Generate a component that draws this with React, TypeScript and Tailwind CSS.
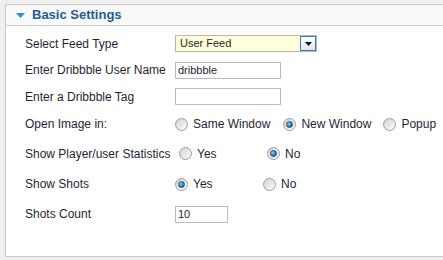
import type { FunctionComponent, ReactNode } from "react";

const Radio: FunctionComponent<{ checked?: boolean }> = ({ checked }) => {
  return (
    <span className="w-[13px] h-[13px] min-w-[13px] rounded-full border border-[#9c9c9c] bg-gradient-to-br from-[#d4d4d4] to-[#fbfbfb] flex items-center justify-center">
      {checked && (
        <span className="w-[7px] h-[7px] rounded-full border border-[#1d4f78] bg-[radial-gradient(circle_at_35%_35%,#8fd0f2,#1f6fa8_70%)]" />
      )}
    </span>
  );
};

const Option: FunctionComponent<{ label: string; checked?: boolean; className?: string }> = ({
  label,
  checked,
  className,
}) => {
  return (
    <span className={`flex items-center ${className ?? ""}`}>
      <Radio checked={checked} />
      <span className="ml-[5px]">{label}</span>
    </span>
  );
};

const Row: FunctionComponent<{ label: string; height: string; children: ReactNode }> = ({
  label,
  height,
  children,
}) => {
  return (
    <div className={`flex items-center pl-[19px] ${height}`}>
      <span className="min-w-[150px] whitespace-nowrap">{label}</span>
      {children}
    </div>
  );
};

const TextInput: FunctionComponent<{ value?: string; width: string }> = ({ value, width }) => {
  return (
    <div className={`h-[17px] border border-[#bcbcbc] bg-white pl-[2px] flex items-center text-[11px] ${width}`}>
      {value}
    </div>
  );
};

export default function App() {
  return (
    <div className="w-[443px] h-[260px] overflow-hidden bg-[#f0f0f0] pt-[4px] pl-[5px] font-['Liberation_Sans',Arial,sans-serif] text-[12px] text-[#1f1f33]">
      <div className="w-[460px] h-[253px] bg-white border border-r-0 border-[#c9c9c9]">
        <div className="h-[21px] bg-[#f9f9f9] border-b border-[#c9c9c9] flex items-center pl-[10px]">
          <svg width="9" height="5" viewBox="0 0 9 5" className="mr-[7px]">
            <polygon points="0,0 9,0 4.5,5" fill="#3a8ac4" />
          </svg>
          <span className="text-[13px] font-bold text-[#1f5d93]">Basic Settings</span>
        </div>
        <div className="pt-[4px]">
          <Row label="Select Feed Type" height="h-[27px]">
            <div className="w-[142px] h-[17px] border border-[#b5b5b5] bg-[#ffffd9] flex items-center justify-between text-[11px]">
              <span className="pl-[4px]">User Feed</span>
              <span className="w-[16px] h-[15px] border border-[#3a7db3] bg-gradient-to-b from-[#ffffff] to-[#dfe6ee] flex items-center justify-center">
                <svg width="7" height="4" viewBox="0 0 7 4">
                  <polygon points="0,0 7,0 3.5,4" fill="#111" />
                </svg>
              </span>
            </div>
          </Row>
          <Row label="Enter Dribbble User Name" height="h-[26px]">
            <TextInput value="dribbble" width="w-[106px]" />
          </Row>
          <Row label="Enter a Dribbble Tag" height="h-[27px]">
            <TextInput width="w-[106px]" />
          </Row>
          <Row label="Open Image in:" height="h-[28px]">
            <Option label="Same Window" className="mr-[13px]" />
            <Option label="New Window" checked className="mr-[12px]" />
            <Option label="Popup" />
          </Row>
          <Row label="Show Player/user Statistics" height="h-[31px]">
            <div className="flex items-center ml-[4px]">
              <Option label="Yes" className="w-[88px]" />
              <Option label="No" checked />
            </div>
          </Row>
          <Row label="Show Shots" height="h-[30px]">
            <Option label="Yes" checked className="w-[88px]" />
            <Option label="No" />
          </Row>
          <Row label="Shots Count" height="h-[30px]">
            <TextInput value="10" width="w-[53px]" />
          </Row>
        </div>
      </div>
    </div>
  );
}
